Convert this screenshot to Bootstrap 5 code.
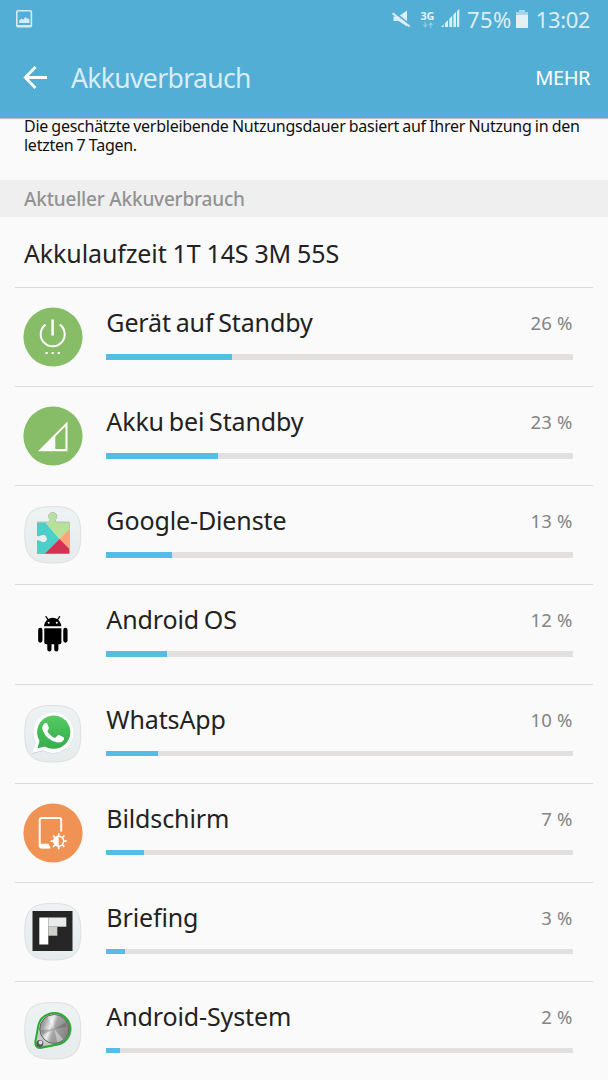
<!DOCTYPE html>
<html lang="de">
<head>
<meta charset="utf-8">
<meta name="viewport" content="width=device-width, initial-scale=1">
<title>Akkuverbrauch</title>
<link rel="stylesheet" href="https://cdn.jsdelivr.net/npm/bootstrap@5.3.0/dist/css/bootstrap.min.css">
<style>
body{font-family:"Noto Sans","Open Sans",sans-serif;background:#fafafa;color:#222;height:1080px;overflow:hidden}
svg{display:block;flex:none}
.app-head{background:#52aed4;height:118px;box-shadow:0 1px 1px #b9bfc2;flex:none}
.status-bar{height:37px;padding:0 18px 0 16px;color:#dceef7;font-size:22px;line-height:34px}
.title-bar{height:81px;padding:0 18px 0 23px;color:#fff}
.app-title{font-size:26.5px;line-height:36px;letter-spacing:-.64px;color:#d9edf6;margin-left:23px}
.more{font-size:20px;line-height:28px;letter-spacing:-.45px}
.net-label{font-size:10.8px;font-weight:700;line-height:12px;letter-spacing:-.2px;color:#e4f2f9}
.hint{font-size:16px;line-height:18.5px;letter-spacing:-.26px;word-spacing:-.6px;color:#111;height:62px;padding:0 24px}
.hint span{display:block;margin-top:-1px}
.section-label{height:37px;padding-left:24px;background:#efefef;color:#929292;font-size:19px;font-weight:500;line-height:38px;letter-spacing:-.2px;flex:none}
.usage-list{margin:0 15px}
.runtime{height:71px;padding-left:9px;font-size:25px;line-height:72px;letter-spacing:-.12px;word-spacing:-.4px;border-bottom:1px solid #dcdcdc;flex:none}
.usage{height:99.14px;padding:17px 20.5px 0 8px;border-bottom:1px solid #dcdcdc}
.usage>svg{margin-top:2px}
.usage-body{margin-left:23.3px}
.usage-name{font-size:25px;line-height:34px;letter-spacing:-.12px;word-spacing:-1.6px}
.usage-pct{font-size:18.5px;line-height:36px;letter-spacing:.15px;color:#848484}
.progress{--bs-progress-height:5.5px;--bs-progress-bg:#e1e0df;--bs-progress-bar-bg:#54bde4;--bs-progress-border-radius:0;margin-top:13px}
</style>
</head>
<body class="d-flex flex-column">
<svg width="0" height="0" class="position-absolute">
  <defs>
    <linearGradient id="tileFill" x2="0" y2="1"><stop stop-color="#eef2f2"/><stop offset="1" stop-color="#e6ebec"/></linearGradient>
    <linearGradient id="waFill" x2="0" y2="1"><stop stop-color="#56ca62"/><stop offset="1" stop-color="#35ad4c"/></linearGradient>
    <linearGradient id="steel" x2="1" y2=".35"><stop stop-color="#777"/><stop offset=".25" stop-color="#aaa"/><stop offset=".45" stop-color="#eee"/><stop offset=".6" stop-color="#a5a5a5"/><stop offset="1" stop-color="#888"/></linearGradient>
    <symbol id="tile" viewBox="0 0 60 60"><path d="M29.800 1.500C51 1.500 57.800 8 57.800 29.700S51 58 29.800 58 1.800 51.500 1.800 29.700 8.500 1.500 29.800 1.500Z" fill="url(#tileFill)" stroke="#dde0df" stroke-width="1"/></symbol>
  </defs>
</svg>

<header class="app-head">
  <div class="status-bar d-flex align-items-center">
    <svg width="17" height="18" viewBox="0 0 17 18" class="me-auto"><rect x=".8" y=".8" width="14.600" height="16" rx="1" fill="none" stroke="#d4eaf4" stroke-width="1.600"/><path d="M3.200 13v-2.600l2.200-2 1.700 1.400 2.300-2.800 1.600 1.700 1.400-.4 1 1.500V13zM1 15h14.500v2H1z" fill="#d4eaf4"/></svg>
    <svg width="19" height="18" viewBox="0 0 19 18"><path d="M1.500 6.500h5L15 .5v16l-8.500-5.500h-5z" fill="#dceef7"/><path d="M1 1.200 19 15.700" stroke="#52aed4" stroke-width="2"/><path d="M.5 3.200 17.700 16.500" stroke="#dceef7" stroke-width="2"/></svg>
    <div style="margin-left:10px"><div class="net-label">3G</div><svg width="13" height="6" viewBox="0 0 13 6"><path d="M4.200 0v4M9.700 6V2" stroke="#8fcae2" stroke-width="1.300"/><path d="M1.700 2.700h5L4.200 5.700zM7.200 3h5L9.700 0z" fill="#8fcae2"/></svg></div>
    <svg width="19" height="19" viewBox="0 0 19 19" style="margin-left:7px" fill="#dceef7"><path d="M0 18 2.700 15.300V18zM4 18v-4l3-3v7zM8.300 18V9.700l2.900-2.900V18zM12.400 18V5.600L15 3v15zM16 18V2l2.300-2v18z"/></svg>
    <span style="margin-left:7px;letter-spacing:.4px">75%</span>
    <svg width="12" height="18" viewBox="0 0 12 18" style="margin-left:4px"><path d="M0 2h3V0h6v2h3v4H0z" fill="#a8d6e9"/><path d="M0 5h12v13H0z" fill="#e5f0f4"/></svg>
    <span style="margin-left:8px;letter-spacing:-.4px">13:02</span>
  </div>
  <div class="title-bar d-flex align-items-center">
    <svg width="25" height="24" viewBox="0 0 25 24"><path d="M24 11.500H3M12.500 1 2.300 11.500l10.200 10.500" fill="none" stroke="#fff" stroke-width="2.800"/></svg>
    <span class="app-title me-auto">Akkuverbrauch</span>
    <span class="more">MEHR</span>
  </div>
</header>

<p class="hint mb-0 flex-shrink-0"><span>Die geschätzte verbleibende Nutzungsdauer basiert auf Ihrer Nutzung in den letzten 7 Tagen.</span></p>
<div class="section-label">Aktueller Akkuverbrauch</div>
<main class="usage-list">
  <div class="runtime">Akkulaufzeit 1T 14S 3M 55S</div>

  <div class="usage d-flex align-items-start">
    <svg width="60" height="60" viewBox="0 0 60 60"><circle cx="30" cy="30" r="29.600" fill="#88bd68"/><path d="M22.600 17.600a12 12 0 1 0 14.200 0" fill="none" stroke="#fff" stroke-width="2"/><path d="M29.600 12.500v16" stroke="#fff" stroke-width="2.500"/><path d="M22.500 45h2.200v2h-2.200zM28.600 45h2.200v2h-2.200zM34.700 45h2.200v2h-2.200z" fill="#fff"/></svg>
    <div class="usage-body flex-grow-1"><div class="d-flex justify-content-between"><span class="usage-name">Gerät auf Standby</span><span class="usage-pct">26 %</span></div><div class="progress"><div class="progress-bar" style="width:27%"></div></div></div>
  </div>

  <div class="usage d-flex align-items-start">
    <svg width="60" height="60" viewBox="0 0 60 60"><circle cx="30" cy="30" r="29.600" fill="#88bd68"/><path fill-rule="evenodd" d="M15 45.200 44.500 15.400v29.800zM32.300 30.600v12.500h10.200V20.300z" fill="#fff"/></svg>
    <div class="usage-body flex-grow-1"><div class="d-flex justify-content-between"><span class="usage-name">Akku bei Standby</span><span class="usage-pct">23 %</span></div><div class="progress"><div class="progress-bar" style="width:24%"></div></div></div>
  </div>

  <div class="usage d-flex align-items-start">
    <svg width="60" height="60" viewBox="0 0 60 60"><use href="#tile"/>
      <clipPath id="piece"><path d="M14.500 17.700H25.500Q28 17.500 27 15C24.500 11.500 26 8.200 29.700 8.200S35 11.500 32.500 15Q31.500 17.500 34 17.700H46.200V48.500H14.500V35.500Q15 34.500 17.500 36C21 38 23.800 36.500 23.800 33.200S21 28.500 17.500 30.300Q15 31.500 14.500 30.500Z"/></clipPath>
      <path d="M14.500 17.200H25.500Q28 17 27 14.500C24.500 11 26 7.700 29.700 7.700S35 11 32.500 14.500Q31.500 17 34 17.200H46.200V48.500H14.500Z" fill="none" stroke="#8d9c91" stroke-width=".8"/>
      <g clip-path="url(#piece)"><path d="M14 17h8l14.500 16.900L21.800 49H14z" fill="#4bcfc9"/><path d="M22 17V7h14v10h11v7L36.500 33.900z" fill="#b5e298"/><path d="M36.500 33.900 47 23.500v21z" fill="#ffa578"/><path d="M21.500 49 36.500 33.900 47 44.500V49z" fill="#d23353"/></g>
      <path d="M14 30.500Q15 31.500 17.500 30.300C21 28.500 23.800 29.900 23.800 33.200S21 38 17.500 36Q15 34.500 14 35.500" fill="#e9eeee"/><path d="M14.500 30.500Q15 31.500 17.500 30.300C21 28.500 23.800 29.900 23.800 33.200" fill="none" stroke="#699" stroke-width=".6"/></svg>
    <div class="usage-body flex-grow-1"><div class="d-flex justify-content-between"><span class="usage-name">Google-Dienste</span><span class="usage-pct">13 %</span></div><div class="progress"><div class="progress-bar" style="width:14%"></div></div></div>
  </div>

  <div class="usage d-flex align-items-start">
    <svg width="60" height="60" viewBox="0 0 60 60"><path d="M21 22.300c.5-5 4-8.600 8.700-8.600s8.200 3.600 8.700 8.600zM21.300 24.200h17.100v14.300q0 1.800-1.800 1.800h-1.200v5.200a2.100 2.100 0 0 1-4.200 0v-5.200h-2.700v5.200a2.100 2.100 0 0 1-4.200 0v-5.200h-1.200q-1.800 0-1.800-1.800z"/><path d="M17.300 26v10.500M42.400 26v10.500" stroke="#000" stroke-width="4.300" stroke-linecap="round"/><path d="m23 12.600 2.500 3.700M36.600 12.600l-2.500 3.700" stroke="#000" stroke-width="1.300" stroke-linecap="round"/><circle cx="25.700" cy="18.800" r="1" fill="#fff"/><circle cx="33.800" cy="18.800" r="1" fill="#fff"/></svg>
    <div class="usage-body flex-grow-1"><div class="d-flex justify-content-between"><span class="usage-name">Android OS</span><span class="usage-pct">12 %</span></div><div class="progress"><div class="progress-bar" style="width:13%"></div></div></div>
  </div>

  <div class="usage d-flex align-items-start">
    <svg width="60" height="60" viewBox="0 0 60 60"><use href="#tile"/><path d="M9.500 49.800 12.600 39.200A20.300 20.300 0 1 1 20.300 46.800z" fill="#bcc3c4"/><path d="M9.500 49 12.600 38.500A20.300 20.300 0 1 1 20.300 46.300z" fill="#fff"/><path d="m14.500 44.200 2-7.300A16.700 16.700 0 1 1 22 42.400z" fill="url(#waFill)"/><path d="M20.700 20.200q1.200-1.600 3.200-1.100l2 4.600q.4 1-1.600 3.200 2.700 5.200 7.800 7l2.500-2.400q1-.8 1.900-.2l4 2q1.100.6.1 2.600-1.900 3.200-6 2.600-11-2.300-14.800-12.100-1.400-3.700.9-6.200z" fill="#fff"/></svg>
    <div class="usage-body flex-grow-1"><div class="d-flex justify-content-between"><span class="usage-name">WhatsApp</span><span class="usage-pct">10 %</span></div><div class="progress"><div class="progress-bar" style="width:11%"></div></div></div>
  </div>

  <div class="usage d-flex align-items-start">
    <svg width="60" height="60" viewBox="0 0 60 60"><circle cx="30" cy="30" r="29.600" fill="#ef9253"/><path d="M38.200 28.500V17q0-2-2-2H18.700q-2 0-2 2v25.500q0 2 2 2h8.500" fill="none" stroke="#fff" stroke-width="2"/><path d="M17 40.700h8.500l2 4.500H18q-1 0-1-1z" fill="#fff"/><path d="M35.700 30.200v16M27.700 38.200h16M30 32.500l11.400 11.400M41.400 32.500 30 43.900" stroke="#fff" stroke-width="1.700"/><circle cx="35.700" cy="38.200" r="5.700" fill="#fff"/><path d="M35.700 34a4.200 4.200 0 0 1 0 8.400z" fill="#ef9253"/></svg>
    <div class="usage-body flex-grow-1"><div class="d-flex justify-content-between"><span class="usage-name">Bildschirm</span><span class="usage-pct">7 %</span></div><div class="progress"><div class="progress-bar" style="width:8%"></div></div></div>
  </div>

  <div class="usage d-flex align-items-start">
    <svg width="60" height="60" viewBox="0 0 60 60"><use href="#tile"/><path d="M9.500 9h40v40h-40z" fill="#262626"/><path d="M16.300 15.500h9v27h-9z" fill="#fff"/><path d="M25.300 15.500h18v9.200h-18z" fill="#e8ebe9"/><path d="M25.300 24.700h9v9h-9z" fill="#cfd0cc"/></svg>
    <div class="usage-body flex-grow-1"><div class="d-flex justify-content-between"><span class="usage-name">Briefing</span><span class="usage-pct">3 %</span></div><div class="progress"><div class="progress-bar" style="width:4%"></div></div></div>
  </div>

  <div class="usage d-flex align-items-start">
    <svg width="60" height="60" viewBox="0 0 60 60"><use href="#tile"/><path d="M12.300 42 15.500 25.500A16.700 16.700 0 1 1 37 44L17 48Q12 48 12.300 42z" fill="#9aa09c"/><path d="M12.300 41 15.300 24.500A16 16 0 1 1 36.500 43L17.500 46.700Q12 47 12.300 41z" fill="#c5cac7" stroke="#22ad2c" stroke-width="1.900"/><circle cx="31.300" cy="28" r="14.500" fill="url(#steel)" stroke="#626662"/><path d="m31.300 28-7-12 5-1.500zM31.300 28l9 10.500-6 3z" fill="#fff" opacity=".4"/><path d="m31.300 28 12-7v5zM31.300 28l-12 6-1-5z" fill="#444" opacity=".3"/><circle cx="16.800" cy="42.500" r="3.500" fill="#555"/><circle cx="17.500" cy="41.500" r="1.900" fill="#ddd"/></svg>
    <div class="usage-body flex-grow-1"><div class="d-flex justify-content-between"><span class="usage-name">Android-System</span><span class="usage-pct">2 %</span></div><div class="progress"><div class="progress-bar" style="width:3%"></div></div></div>
  </div>
</main>
<script src="https://cdn.jsdelivr.net/npm/bootstrap@5.3.0/dist/js/bootstrap.bundle.min.js"></script>
</body>
</html>
